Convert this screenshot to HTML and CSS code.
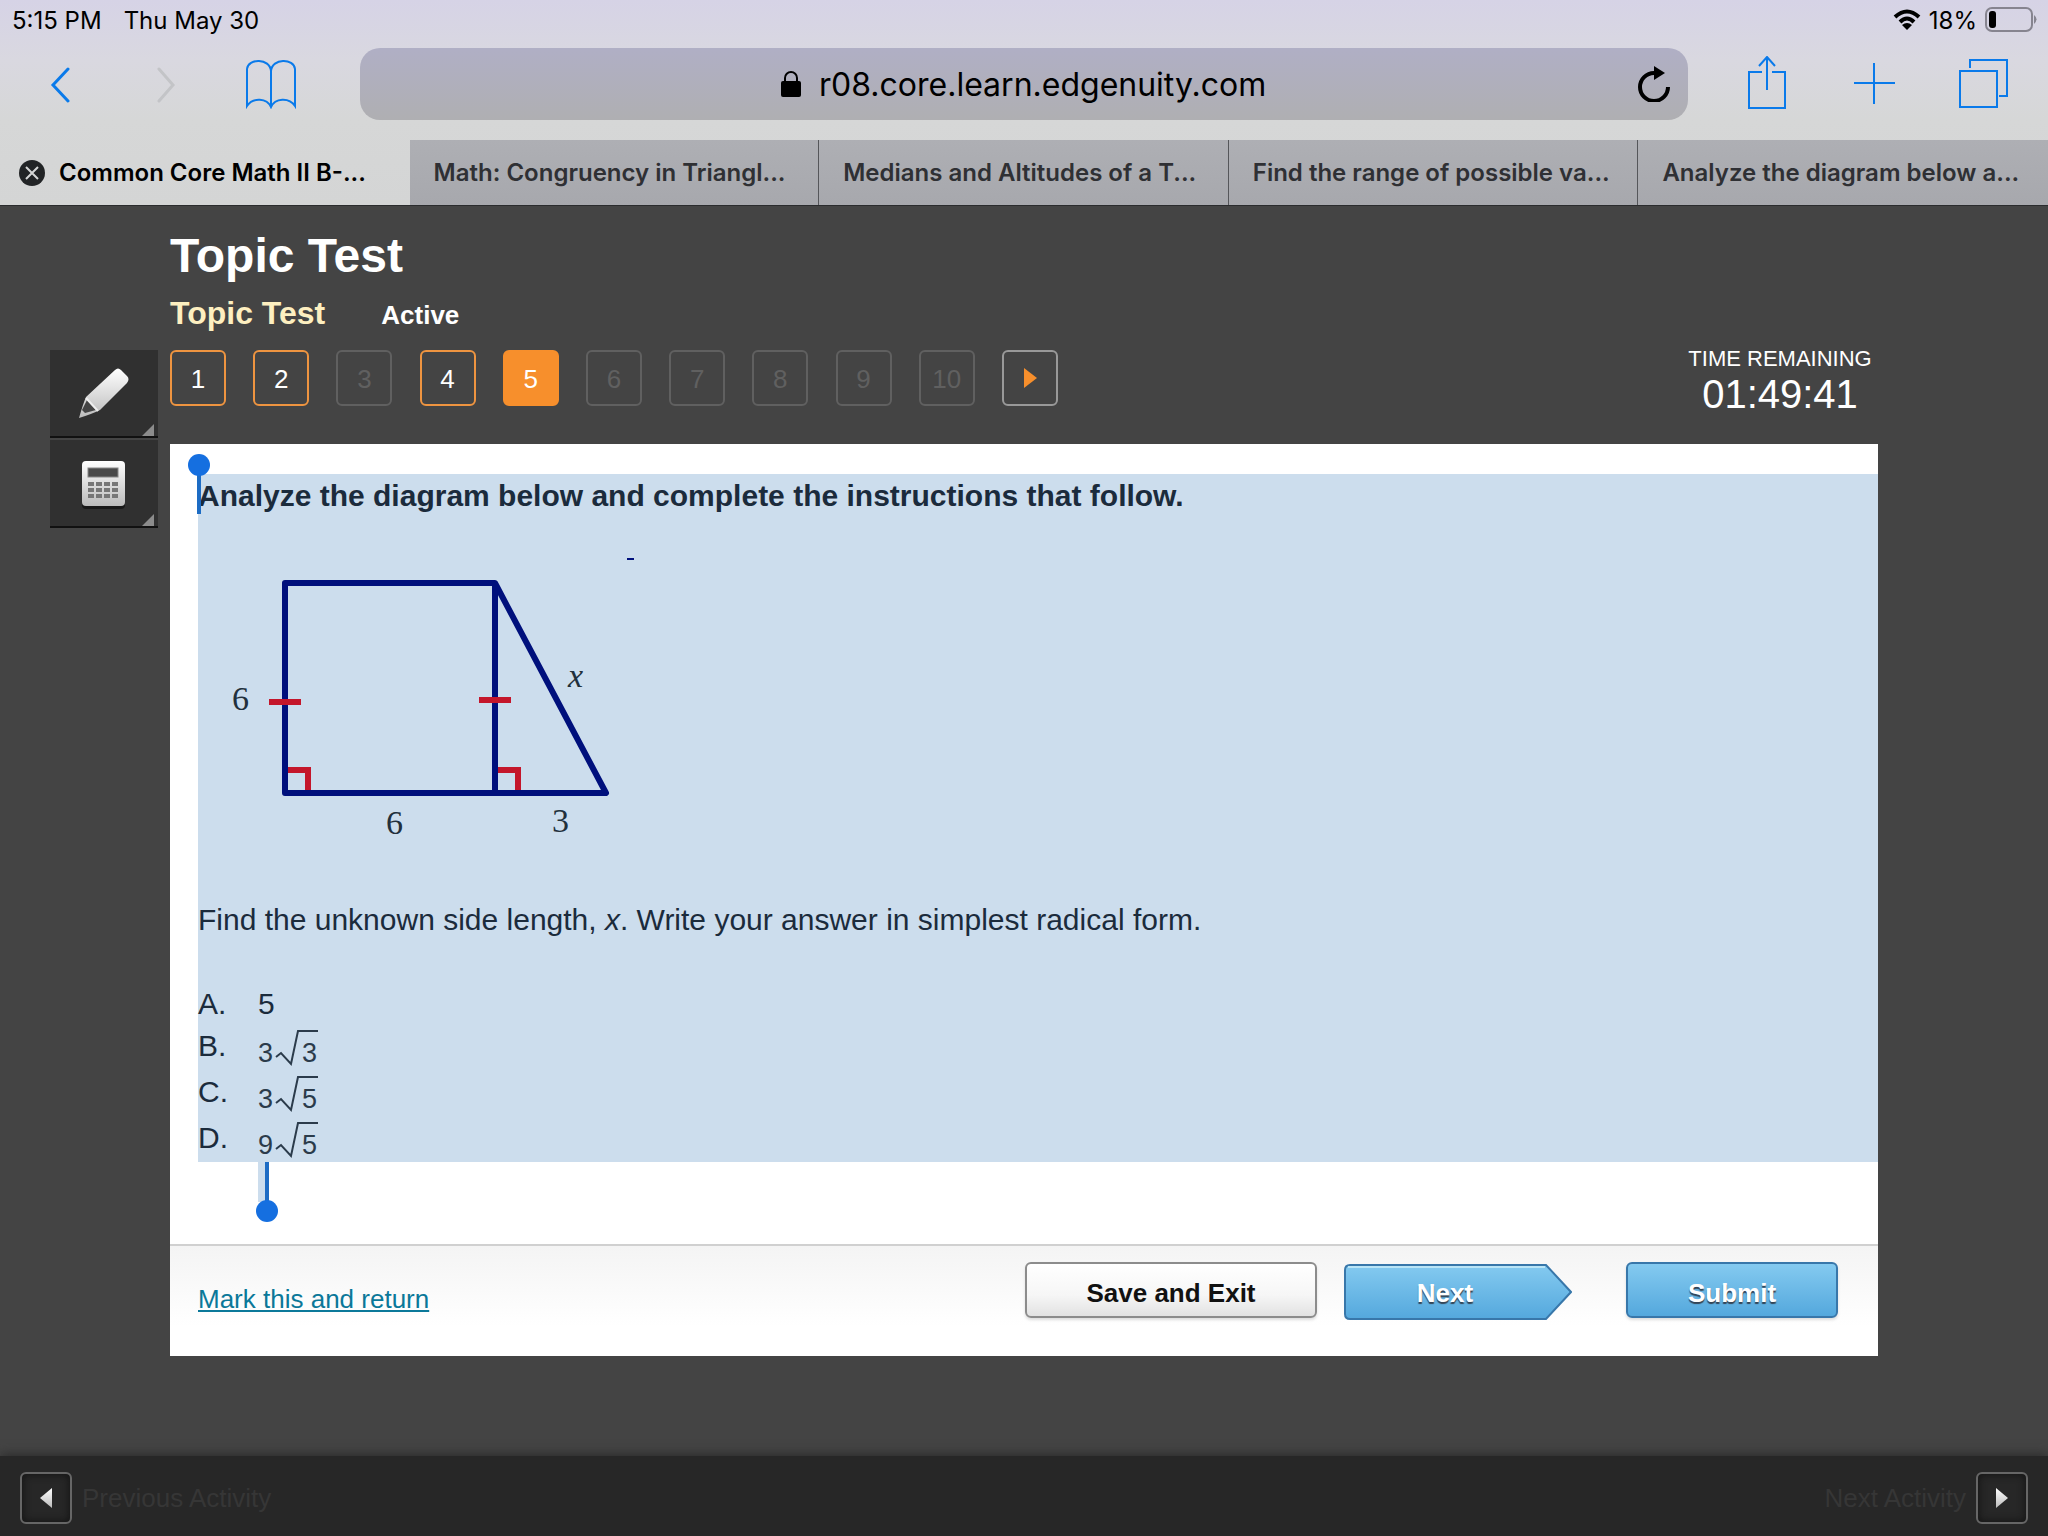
FILE: index.html
```html
<!DOCTYPE html>
<html lang="en">

<head>
    <meta charset="UTF-8">
    <title>Common Core Math II B - Topic Test</title>
    <link rel="stylesheet" href="styles.css">
</head>

<body>
    <!-- browser -->
    <div class="browser">
        <div class="status">
            <span>5:15 PM</span>
            <span class="date">Thu May 30</span>
            <div class="battery">
                <svg width="28" height="22" viewBox="0 0 28 22" fill="none" stroke="#000" stroke-width="4">
                    <path d="M2 8 Q14 -3 26 8" />
                    <path d="M7 13 Q14 6 21 13" />
                    <path d="M9 16 Q14 12 19 16 L14 21 Z" fill="#000" stroke="none" />
                </svg>
                <span>18%</span>
                <svg width="52" height="26" viewBox="0 0 52 26">
                    <rect x="1" y="1" width="46" height="23" rx="6" fill="none" stroke="#86848f" stroke-width="2" />
                    <rect x="4" y="4" width="7" height="17" rx="3" />
                    <path d="M49 8 Q54 12 49 17 Z" fill="#86848f" />
                </svg>
            </div>
        </div>
        <div class="toolbar">
            <div class="nav">
                <button type="button" aria-label="Back">
                    <svg width="22" height="38" viewBox="0 0 22 38"><path d="M19 4 L4 20 L19 36" stroke-width="3" stroke-linecap="round" /></svg>
                </button>
                <button type="button" aria-label="Forward" class="off" disabled>
                    <svg width="22" height="38" viewBox="0 0 22 38"><path d="M4 4 L18 20 L4 36" stroke-width="3" stroke-linecap="round" /></svg>
                </button>
                <button type="button" aria-label="Bookmarks">
                    <svg width="52" height="50" viewBox="0 0 52 50"><path d="M25 12 C24 -1 2 -1 1 10 V47 C7 38 21 39 25 48 C29 39 43 38 49 47 V10 C48 -1 26 -1 25 12 V48" stroke-width="2" /></svg>
                </button>
            </div>
            <div class="address">
                <svg width="20" height="28" viewBox="0 0 20 28">
                    <path d="M4 13 V8 a6 6 0 0 1 12 0 V13" fill="none" stroke="#000" stroke-width="2" />
                    <rect x="0" y="11" width="20" height="16" rx="2" />
                </svg>
                <input type="text" aria-label="Address" value="r08.core.learn.edgenuity.com">
                <button type="button" class="reload" aria-label="Reload">
                    <svg width="34" height="38" viewBox="0 0 34 38">
                        <path d="M30 23 A14 14 0 1 1 16 9" fill="none" stroke="#000" stroke-width="4" />
                        <path d="M16 2 L27 9 L16 16 Z" />
                    </svg>
                </button>
            </div>
            <div class="nav nav_right">
                <button type="button" aria-label="Share">
                    <svg width="42" height="56" viewBox="0 0 42 56"><path d="M16 16 H3 V52 H39 V16 H26 M21 34 V2 M13 10 L21 1 L29 10" stroke-width="2" /></svg>
                </button>
                <button type="button" aria-label="New tab">
                    <svg width="42" height="42" viewBox="0 0 42 42"><path d="M20 0 V41 M0 20 H41" stroke-width="2" /></svg>
                </button>
                <button type="button" aria-label="Show tabs">
                    <svg width="50" height="50" viewBox="0 0 50 50"><path d="M2 12 H39 V48 H2 Z M12 9 V1 H49 V37 H41" stroke-width="2" /></svg>
                </button>
            </div>
        </div>
        <div class="tabs">
            <div class="tab current">
                <button type="button" class="close" aria-label="Close tab">
                    <svg width="26" height="26" viewBox="0 0 26 26">
                        <circle cx="13" cy="13" r="13" fill="#222426" />
                        <path d="M7 7 L19 19 M19 7 L7 19" stroke="#d5d6d6" stroke-width="2" />
                    </svg>
                </button>
                <a href="#">Common Core Math II B-...</a>
            </div>
            <div class="tab"><a href="#">Math: Congruency in Triangl...</a></div>
            <div class="tab"><a href="#">Medians and Altitudes of a T...</a></div>
            <div class="tab"><a href="#">Find the range of possible va...</a></div>
            <div class="tab"><a href="#">Analyze the diagram below a...</a></div>
        </div>
    </div>

    <main>
        <header>
            <h1>Topic Test</h1>
            <div class="sub">
                <h2>Topic Test</h2>
                <span class="active">Active</span>
            </div>
        </header>

        <div class="tools">
            <button type="button" aria-label="Highlighter">
                <svg width="108" height="86" viewBox="0 0 108 86">
                    <defs>
                        <linearGradient id="silver" x1="0" y1="0" x2="0" y2="1">
                            <stop offset="0" stop-color="#fff" />
                            <stop offset="1" stop-color="#bbb" />
                        </linearGradient>
                    </defs>
                    <path d="M65 20 Q68 17 71 20 L77 26 Q80 29 77 33 L50 60 Q42 64 29 68 Q33 54 36 47 Z" fill="url(#silver)" />
                    <path d="M37 50 L46 60 L35 63 L32 60 Z" fill="#444" />
                    <path d="M36 48 L48 61" stroke="#eee" stroke-width="2" />
                    <path d="M104 74 V86 H92 Z" fill="#8c8c8c" />
                </svg>
            </button>
            <button type="button" aria-label="Calculator">
                <svg width="108" height="86" viewBox="0 0 108 86">
                    <rect x="32" y="23" width="43" height="46" rx="4" fill="#191919" />
                    <rect x="32" y="21" width="43" height="45" rx="4" fill="url(#silver)" />
                    <rect x="38" y="28" width="30" height="9" fill="#4a4a4a" stroke="#888" />
                    <path d="M38 44 H68 M38 50 H68 M38 56 H68" stroke="#777" stroke-width="4" stroke-dasharray="6 2" />
                    <path d="M104 74 V86 H92 Z" fill="#8c8c8c" />
                </svg>
            </button>
        </div>

        <div class="bar">
            <div class="pager">
                <button type="button" class="done">1</button>
                <button type="button" class="done">2</button>
                <button type="button" disabled>3</button>
                <button type="button" class="done">4</button>
                <button type="button" class="now">5</button>
                <button type="button" disabled>6</button>
                <button type="button" disabled>7</button>
                <button type="button" disabled>8</button>
                <button type="button" disabled>9</button>
                <button type="button" disabled>10</button>
                <button type="button" class="go" aria-label="Next page">
                    <svg width="14" height="20" viewBox="0 0 14 20"><path d="M1 0 L14 10 L1 20 Z" fill="#f78f2c" /></svg>
                </button>
            </div>
            <div class="timer">
                <div class="timer_label">TIME REMAINING</div>
                <div class="timer_value">01:49:41</div>
            </div>
        </div>

        <div class="panel">
            <div class="question">
                <p><b>Analyze the diagram below and complete the instructions that follow.</b></p>
                <svg class="diagram" width="460" height="330" viewBox="0 0 460 330">
                    <path d="M429 26 H436" stroke="#00107c" stroke-width="2" />
                    <g fill="none" stroke="#c4162b" stroke-width="6">
                        <path d="M87 237 H110 V260" />
                        <path d="M297 237 H320 V260" />
                    </g>
                    <path d="M87 50 H297 L408 260 H87 Z M297 50 V260" fill="none" stroke="#00107c" stroke-width="6" stroke-linejoin="round" />
                    <path d="M71 169 H103 M281 167 H313" stroke="#c4162b" stroke-width="6" />
                    <text x="34" y="177">6</text>
                    <text x="188" y="301">6</text>
                    <text x="354" y="299">3</text>
                    <text x="370" y="154" font-style="italic">x</text>
                </svg>
                <p>Find the unknown side length, <i>x</i>. Write your answer in simplest radical form.</p>
                <ol>
                    <li><span>A.</span><span>5</span></li>
                    <li><span>B.</span>
                        <svg class="root" width="62" height="38" viewBox="0 0 62 38">
                            <path d="M18 28 L23 24 L33 35 L40 2 H60" />
                            <text x="0" y="33">3</text><text x="44" y="33">3</text>
                        </svg>
                    </li>
                    <li><span>C.</span>
                        <svg class="root" width="62" height="38" viewBox="0 0 62 38">
                            <path d="M18 28 L23 24 L33 35 L40 2 H60" />
                            <text x="0" y="33">3</text><text x="44" y="33">5</text>
                        </svg>
                    </li>
                    <li><span>D.</span>
                        <svg class="root" width="62" height="38" viewBox="0 0 62 38">
                            <path d="M18 28 L23 24 L33 35 L40 2 H60" />
                            <text x="0" y="33">9</text><text x="44" y="33">5</text>
                        </svg>
                    </li>
                </ol>
                <!-- text selection handles -->
                <div class="handle handle_start"></div>
                <div class="handle handle_end"></div>
            </div>
            <div class="actions">
                <a href="#">Mark this and return</a>
                <button type="button" class="save">Save and Exit</button>
                <button type="button" class="next">
                    <svg width="228" height="58" viewBox="0 0 228 58">
                        <defs>
                            <linearGradient id="blue" x1="0" y1="0" x2="0" y2="1">
                                <stop offset="0" stop-color="#84caf0" />
                                <stop offset="1" stop-color="#54a8dd" />
                            </linearGradient>
                        </defs>
                        <path d="M6 3 H202 L227 30 L202 57 H6 Q1 57 1 52 V8 Q1 3 6 3 Z" fill="url(#blue)" stroke="#3877aa" stroke-width="2" />
                        <path d="M4 5 H201" stroke="#b9e5f7" stroke-width="2" />
                    </svg>
                    <span>Next</span>
                </button>
                <button type="button" class="submit">Submit</button>
            </div>
        </div>
    </main>

    <footer>
        <button type="button" aria-label="Previous Activity">
            <svg width="12" height="20" viewBox="0 0 12 20"><path d="M12 0 L0 10 L12 20 Z" fill="url(#silver)" /></svg>
        </button>
        <span>Previous Activity</span>
        <span class="next_label">Next Activity</span>
        <button type="button" aria-label="Next Activity">
            <svg width="12" height="20" viewBox="0 0 12 20"><path d="M0 0 L12 10 L0 20 Z" fill="url(#silver)" /></svg>
        </button>
    </footer>
</body>

</html>
```
FILE: styles.css
```css
* {
    box-sizing: border-box;
}

body {
    margin: 0;
    min-height: 100vh;
    display: flex;
    flex-direction: column;
    background-color: #444;
    font-family: "Liberation Sans", Arial, sans-serif;
}

h1, h2, p, ol {
    margin: 0;
    padding: 0;
}

button {
    padding: 0;
    border: none;
    background: none;
    font-family: inherit;
    font-size: 26px;
}

svg {
    display: block;
}

/* browser */
.browser {
    background: linear-gradient(#d6d3e6, #d9d8e0 60px, #d6d7d7 120px, #d4d5d5);
    border-bottom: 1px solid #2b2c2e;
    font-family: Inter, "Liberation Sans", sans-serif;
}

.status {
    display: flex;
    align-items: center;
    height: 40px;
    padding: 0 11px 0 12px;
    font-size: 24px;
}

.date {
    margin-left: 22px;
}

.battery {
    display: flex;
    align-items: center;
    gap: 8px;
    margin-left: auto;
}

.toolbar {
    display: grid;
    grid-template-columns: 360px 1fr 360px;
    height: 100px;
    padding: 8px 0 20px;
}

.nav {
    display: flex;
    padding-left: 7px;
}

.nav button {
    display: flex;
    justify-content: center;
    align-items: center;
    width: 106px;
}

.nav svg {
    fill: none;
    stroke: #0a7aea;
}

.nav .off svg {
    stroke: #c3c4c7;
}

.nav_right {
    padding-left: 25px;
}

.nav_right button {
    width: 108px;
}

.address {
    position: relative;
    display: flex;
    justify-content: center;
    align-items: center;
    gap: 18px;
    border-radius: 20px;
    background: linear-gradient(#b0afc5, #afafb2);
}

.address input {
    width: 448px;
    padding: 0;
    border: none;
    background: none;
    font-family: inherit;
    font-size: 32px;
}

.reload {
    position: absolute;
    right: 16px;
    top: 16px;
}

.tabs {
    display: grid;
    grid-template-columns: repeat(5, 1fr);
    height: 65px;
}

.tab {
    display: flex;
    align-items: center;
    padding-left: 24px;
    border-right: 1px solid #55565a;
    background: linear-gradient(#aeafb4, #a7a8ad);
}

.tab a {
    color: #2f3034;
    font-size: 24px;
    font-weight: 600;
    text-decoration: none;
    white-space: nowrap;
}

.tab:last-child {
    border-right: none;
}

.tab.current {
    gap: 14px;
    padding-left: 19px;
    border-right: none;
    background: none;
}

.tab.current a {
    color: #000;
}

/* test page */
main {
    display: grid;
    grid-template-columns: 170px 1fr 170px;
    grid-template-rows: 138px 100px auto;
}

header {
    grid-column: 2;
    padding-top: 22px;
    color: #fff;
}

h1 {
    font-size: 48px;
    line-height: 56px;
}

.sub {
    display: flex;
    align-items: baseline;
    gap: 56px;
    margin-top: 9px;
}

h2 {
    color: #fdefc0;
    font-size: 32px;
    line-height: 40px;
}

.active {
    font-size: 26px;
    font-weight: bold;
}

.tools {
    grid-column: 1;
    grid-row: 2 / 4;
    padding: 6px 0 0 50px;
}

.tools button {
    display: block;
    width: 108px;
    margin-bottom: 2px;
    border-bottom: 2px solid #111;
    background-color: #303030;
}

.bar {
    grid-column: 2;
    grid-row: 2;
    display: flex;
    justify-content: space-between;
    align-items: flex-start;
}

.pager {
    display: flex;
    justify-content: space-between;
    width: 888px;
    margin-top: 6px;
}

.pager button {
    display: flex;
    justify-content: center;
    align-items: center;
    width: 56px;
    height: 56px;
    padding-top: 2px;
    border: 2px solid #606060;
    border-radius: 6px;
    color: #606060;
}

.pager .done {
    border-color: #ee9440;
    color: #fff;
}

.pager .now {
    border-color: #f78f2c;
    background-color: #f78f2c;
    color: #fff;
}

.pager .go {
    padding-top: 0;
    border-color: #999;
}

.timer {
    width: 196px;
    margin-top: 2px;
    color: #fff;
    text-align: center;
}

.timer_label {
    font-size: 22px;
    line-height: 26px;
}

.timer_value {
    font-size: 40px;
    line-height: 44px;
}

.panel {
    grid-column: 2;
    grid-row: 3;
    padding-top: 30px;
    background-color: #fff;
}

.question {
    position: relative;
    margin: 0 0 82px 28px;
    padding: 5px 0 3px;
    background-color: #ccdded;
    color: #1b2b3c;
    font-size: 30px;
    line-height: 34px;
}

.diagram {
    margin: 20px 0 40px;
    font-family: "Liberation Serif", serif;
    font-size: 34px;
    fill: #22303c;
}

ol {
    margin-top: 50px;
    list-style: none;
}

li {
    display: grid;
    grid-template-columns: 60px 1fr;
    margin-top: 8px;
}

.root {
    font-size: 27px;
    fill: #2b3b4b;
}

.root path {
    fill: none;
    stroke: #2b3b4b;
    stroke-width: 2px;
}

.handle {
    position: absolute;
    width: 4px;
    height: 40px;
    background-color: #1d6cc4;
}

.handle::after {
    content: "";
    position: absolute;
    left: -9px;
    width: 22px;
    height: 22px;
    border-radius: 50%;
    background-color: #156fe0;
}

.handle_start {
    left: -1px;
    top: 0;
}

.handle_start::after {
    top: -20px;
}

.handle_end {
    left: 67px;
    top: 100%;
    box-shadow: -4px 0 0 #ccdded, -7px 0 0 #ccdded;
}

.handle_end::after {
    top: 38px;
}

.actions {
    display: flex;
    align-items: flex-start;
    height: 112px;
    padding: 16px 40px 0 28px;
    border-top: 2px solid #d0d0d0;
    background: linear-gradient(#f4f4f4, #fff 80px);
}

.actions a {
    margin: 22px auto 0 0;
    color: #0b7899;
    font-size: 26px;
}

.actions button {
    height: 56px;
    padding-top: 6px;
    font-weight: bold;
}

.actions .save {
    width: 292px;
    border: 2px solid #8c8c8c;
    border-radius: 6px;
    background: linear-gradient(#fff, #f6f6f6 60%, #e2e2e2);
    box-shadow: 0 2px 3px #ddd;
    color: #111;
}

.actions .next {
    position: relative;
    width: 228px;
    height: 58px;
    margin: 0 54px 0 27px;
    padding: 4px 26px 0 0;
    color: #fff;
    text-shadow: 0 2px 1px #345;
}

.next svg {
    position: absolute;
    left: 0;
    top: 0;
}

.next span {
    position: relative;
}

.actions .submit {
    width: 212px;
    border: 2px solid #3877aa;
    border-radius: 6px;
    background: linear-gradient(#84caf0, #54a8dd);
    box-shadow: 0 2px 3px #ddd;
    color: #fff;
    text-shadow: 0 2px 1px #345;
}

/* bottom bar */
footer {
    display: flex;
    align-items: center;
    gap: 10px;
    height: 80px;
    margin-top: auto;
    padding: 4px 20px 0;
    background-color: #272727;
    box-shadow: 0 -2px 10px #2c2c2c;
    color: #363636;
    font-size: 26px;
}

footer button {
    display: flex;
    justify-content: center;
    align-items: center;
    width: 52px;
    height: 52px;
    border: 2px solid #666;
    border-radius: 6px;
    box-shadow: inset 0 0 8px #111;
}

.next_label {
    margin-left: auto;
}
```
